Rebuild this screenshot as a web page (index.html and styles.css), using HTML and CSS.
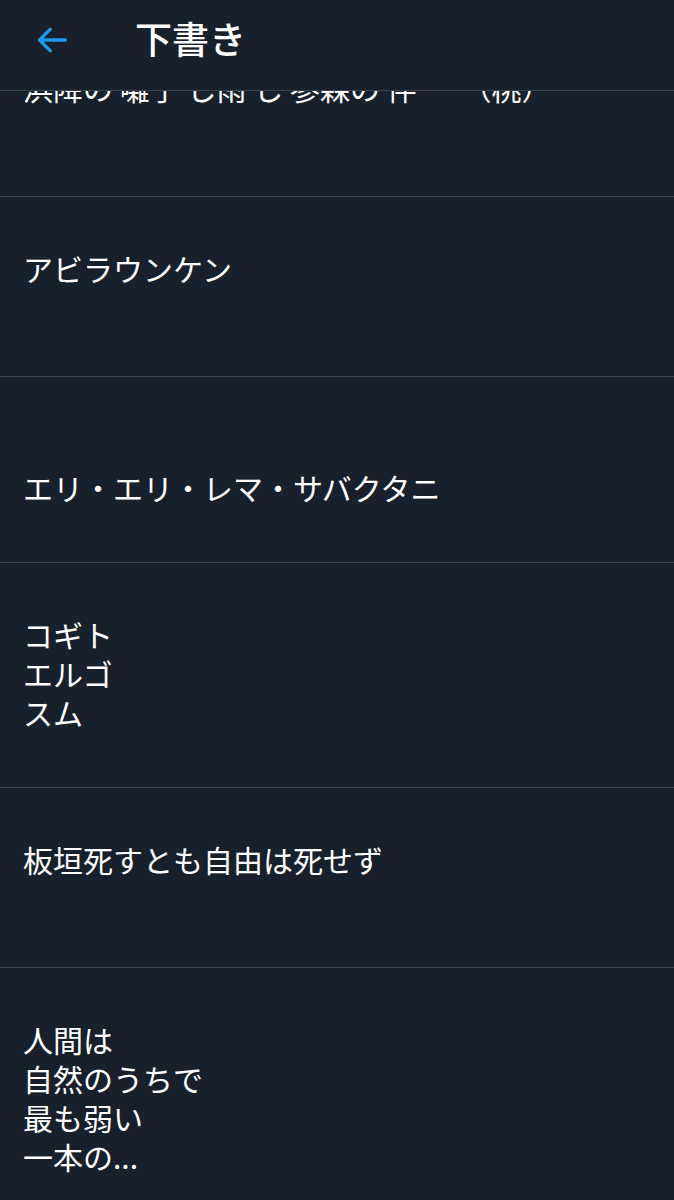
FILE: index.html
```html
<!DOCTYPE html>
<html lang="ja">
<head>
    <meta charset="UTF-8">
    <meta name="viewport" content="width=device-width, initial-scale=1.0">
    <title>下書き</title>
    <link rel="stylesheet" href="styles.css">
</head>
<body>
    <header class="top-bar">
        <button class="back-btn" aria-label="戻る">
            <svg width="40" height="40" viewBox="0 0 24 24">
                <path d="M20 12H5M11 5.5L4.5 12l6.5 6.5" fill="none" stroke="#1d9bf0" stroke-width="2" stroke-linecap="round" stroke-linejoin="round"/>
            </svg>
        </button>
        <h1>下書き</h1>
    </header>

    <ul class="drafts">
        <li class="draft"><span class="draft-text">浜降の 囃子 し雨 し 参森の 伴<span class="gap"></span>（桃）</span></li>
        <li class="draft"><span class="draft-text">アビラウンケン</span></li>
        <li class="draft"><span class="draft-text"><br>エリ・エリ・レマ・サバクタニ</span></li>
        <li class="draft"><span class="draft-text">コギト<br>エルゴ<br>スム</span></li>
        <li class="draft"><span class="draft-text">板垣死すとも自由は死せず</span></li>
        <li class="draft"><span class="draft-text">人間は<br>自然のうちで<br>最も弱い<br>一本の...</span></li>
    </ul>
</body>
</html>
```

FILE: styles.css
```css
:root {
    --color-bg: #17202b;
    --color-text: #ffffff;
    --color-line: #38444d;
    --color-accent: #1d9bf0;
}

body {
    margin: 0;
    padding: 0;
    background-color: var(--color-bg);
    color: var(--color-text);
    font-family: 'Noto Sans CJK JP', 'Noto Sans', sans-serif;
}

.top-bar {
    position: fixed;
    top: 0;
    left: 0;
    right: 0;
    height: 90px;
    display: flex;
    align-items: center;
    background-color: var(--color-bg);
    border-bottom: 1px solid var(--color-line);
    z-index: 10;
}

.back-btn {
    width: 70px;
    height: 70px;
    margin-left: 17px;
    padding: 0;
    background: none;
    border: none;
    display: flex;
    align-items: center;
    justify-content: center;
    margin-top: -10px;
    cursor: pointer;
}

.top-bar h1 {
    margin: -14px 0 0 48px;
    font-size: 37px;
    font-weight: 500;
    line-height: 1;
}

.drafts {
    list-style: none;
    margin: 17px 0 0;
    padding: 0;
}

.draft {
    min-height: 180px;
    box-sizing: border-box;
    padding: 52px 23px 55px;
    border-bottom: 1px solid var(--color-line);
    font-size: 30px;
    line-height: 39px;
}

.draft:first-child {
    padding-top: 51px;
}

.gap {
    display: inline-block;
    width: 45px;
}
```
